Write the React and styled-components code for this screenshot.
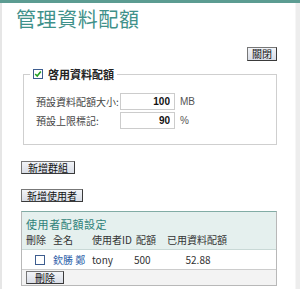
import React from "react";
import styled, { createGlobalStyle } from "styled-components";

const Global = createGlobalStyle`
  html, body { margin: 0; padding: 0; background: #fff; }
  body { font-family: "Liberation Sans", "Noto Sans CJK TC", sans-serif; font-size: 10px; color: #333; }
`;

const Page = styled.div`
  width: 300px;
  height: 289px;
  box-sizing: border-box;
  border-top: 3px solid #5c9c92;
  display: flex;
  overflow: hidden;
`;

const Main = styled.div`
  flex: 1;
  min-width: 0;
  border-left: 2px solid #e6e6e6;
  padding: 0 18px 0 19px;
  display: flex;
  flex-direction: column;
`;

const Strip = styled.div`
  width: 4px;
  background: #ededed;
  border-left: 1px solid #f6f6f6;
`;

const Title = styled.h1`
  margin: 4px 0 0 -5px;
  font-family: "Noto Sans CJK TC", sans-serif;
  font-weight: normal;
  font-size: 20px;
  line-height: 24px;
  letter-spacing: 0.6px;
  color: #3f918a;
`;

const TopBar = styled.div`
  display: flex;
  justify-content: flex-end;
  margin-top: 16px;
`;

const Btn = styled.button`
  font-family: "Noto Sans CJK TC", sans-serif;
  font-size: 10px;
  line-height: 10px;
  height: ${(p) => p.h || 13}px;
  padding: 0 ${(p) => p.px || 5}px;
  margin: 0;
  border: 1px solid #3a3a3a;
  border-top-color: #777;
  border-left-color: #777;
  background: linear-gradient(#f2f4f8, #d9dde6);
  color: #111;
  cursor: pointer;
`;

const Fieldset = styled.fieldset`
  display: block;
  min-width: 0;
  margin: 5px 0 0 2px;
  padding: 11px 12px 15px 12px;
  border: 1px solid #cfcfcf;
`;

const FieldGrid = styled.div`
  display: grid;
  grid-template-columns: 84px 56px auto;
  row-gap: 2px;
  align-items: center;
`;

const Legend = styled.legend`
  margin-left: -6px;
  padding: 0 3px;
  display: flex;
  align-items: center;
  gap: 5px;
  font-family: "Noto Sans CJK TC", sans-serif;
  font-size: 11px;
  font-weight: bold;
  color: #222;
`;

const Label = styled.span`
  font-family: "Noto Sans CJK TC", sans-serif;
  font-size: 10px;
  color: #444;
  white-space: nowrap;
`;

const Input = styled.input`
  box-sizing: border-box;
  width: 55px;
  height: 17px;
  margin: 0;
  border: 1px solid #cccccc;
  font-family: "Liberation Sans", sans-serif;
  font-size: 10px;
  font-weight: bold;
  text-align: right;
  padding: 0 4px;
  color: #111;
`;

const Unit = styled.span`
  font-size: 10px;
  color: #555;
  padding-left: 4px;
`;

const ActionRow = styled.div`
  margin-top: ${(p) => p.mt}px;
  display: flex;
`;

const Panel = styled.div`
  margin-top: 9px;
  border: 1px solid #b8b8b8;
  border-top-color: #82aca5;
  display: flex;
  flex-direction: column;
`;

const PanelHead = styled.div`
  background: #e5f0ee;
  padding: 4px 0 2px 4px;
  border-bottom: 1px solid #c9d9d6;
`;

const PanelTitle = styled.div`
  font-family: "Noto Sans CJK TC", sans-serif;
  font-size: 11px;
  line-height: 16px;
  letter-spacing: 0.6px;
  color: #2f8279;
`;

const Row = styled.div`
  display: grid;
  grid-template-columns: 27px 39px 42px 33px 62px;
  align-items: center;
  height: ${(p) => p.h}px;
  padding-left: ${(p) => p.pl || 0}px;
  font-family: "Noto Sans CJK TC", "Liberation Sans", sans-serif;
  font-size: 10px;
  color: #333;
`;

const Cell = styled.span`
  display: flex;
  justify-content: ${(p) => (p.align === "center" ? "center" : "flex-start")};
  padding-left: ${(p) => p.pl || 0}px;
  color: ${(p) => (p.link ? "#2b5ea8" : "inherit")};
  white-space: nowrap;
`;

const DataRow = styled(Row)`
  background: #fff;
  border-bottom: 1px solid #cccccc;
`;

const Footer = styled.div`
  background: #f3f3f3;
  padding: 1px 0 1px 4px;
  display: flex;
`;

const CheckBox = ({ checked }) => (
  <svg width="10" height="10" viewBox="0 0 10 10">
    <rect x="0.5" y="0.5" width="9" height="9" fill="#fff" stroke="#3d5d8f" />
    {checked && (
      <path d="M2.2 5 L4.2 7 L7.8 2.6" fill="none" stroke="#22a022" strokeWidth="1.6" />
    )}
  </svg>
);

export default function App() {
  return (
    <>
      <Global />
      <Page>
        <Main>
          <Title>管理資料配額</Title>
          <TopBar>
            <Btn h={14} px={4}>關閉</Btn>
          </TopBar>
          <Fieldset>
            <Legend>
              <CheckBox checked />
              啓用資料配額
            </Legend>
            <FieldGrid>
              <Label>預設資料配額大小:</Label>
              <Input defaultValue="100" />
              <Unit>MB</Unit>
              <Label>預設上限標記:</Label>
              <Input defaultValue="90" />
              <Unit>%</Unit>
            </FieldGrid>
          </Fieldset>
          <ActionRow mt={16}>
            <Btn px={6}>新增群組</Btn>
          </ActionRow>
          <ActionRow mt={15}>
            <Btn px={5}>新增使用者</Btn>
          </ActionRow>
          <Panel>
            <PanelHead>
              <PanelTitle>使用者配額設定</PanelTitle>
              <Row h={15}>
                <Cell>刪除</Cell>
                <Cell>全名</Cell>
                <Cell>使用者ID</Cell>
                <Cell pl={2}>配額</Cell>
                <Cell>已用資料配額</Cell>
              </Row>
            </PanelHead>
            <DataRow h={19} pl={4}>
              <Cell align="center">
                <CheckBox />
              </Cell>
              <Cell link>欽勝 鄭</Cell>
              <Cell>tony</Cell>
              <Cell>500</Cell>
              <Cell align="center">52.88</Cell>
            </DataRow>
            <Footer>
              <Btn px={8}>刪除</Btn>
            </Footer>
          </Panel>
        </Main>
        <Strip />
      </Page>
    </>
  );
}
